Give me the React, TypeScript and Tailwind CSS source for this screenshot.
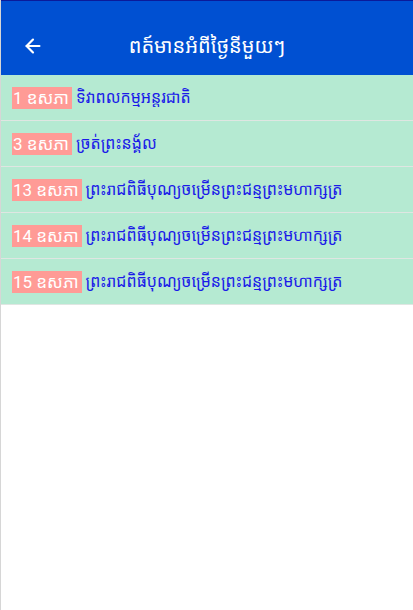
import { ArrowLeft } from "lucide-react";

const items = [
  { day: "1", label: "ទិវាពលកម្មអន្តរជាតិ" },
  { day: "3", label: "ច្រត់ព្រះនង្គ័ល" },
  { day: "13", label: "ព្រះរាជពិធីបុណ្យចម្រើនព្រះជន្មព្រះមហាក្សត្រ" },
  { day: "14", label: "ព្រះរាជពិធីបុណ្យចម្រើនព្រះជន្មព្រះមហាក្សត្រ" },
  { day: "15", label: "ព្រះរាជពិធីបុណ្យចម្រើនព្រះជន្មព្រះមហាក្សត្រ" },
];

export default function App() {
  return (
    <div
      className="w-[413px] h-[610px] bg-white border-l border-[#d6d6d6] overflow-hidden"
      style={{ fontFamily: '"Roboto", "Noto Sans Khmer", "Khmer OS", "Noto Sans", sans-serif' }}
    >
      {/* header */}
      <header className="h-[75px] bg-[#0050d2] border-t border-[#0a1a9a] flex items-center relative">
        <button className="ml-[21px] mt-[16px] text-white">
          <ArrowLeft size={22} strokeWidth={2.4} />
        </button>
        <h1 className="absolute left-0 right-0 top-[31px] text-center text-white text-[20px] leading-[28px]">
          ពត៍មានអំពីថ្ងៃនីមួយៗ
        </h1>
      </header>

      {/* list */}
      <ul className="flex flex-col">
        {items.map((item, i) => (
          <li
            key={i}
            className="h-[46px] bg-[#b5ead2] border-b border-[#dfe6e2] flex items-center pl-[11px]"
          >
            <span className="bg-[#ff9b96] text-white text-[17px] leading-[22px] px-[1px] pr-[3px] mr-[4px]">
              {item.day} ឧសភា
            </span>
            <span className="text-[#1b1be8] text-[16px] leading-[22px]">{item.label}</span>
          </li>
        ))}
      </ul>
    </div>
  );
}
